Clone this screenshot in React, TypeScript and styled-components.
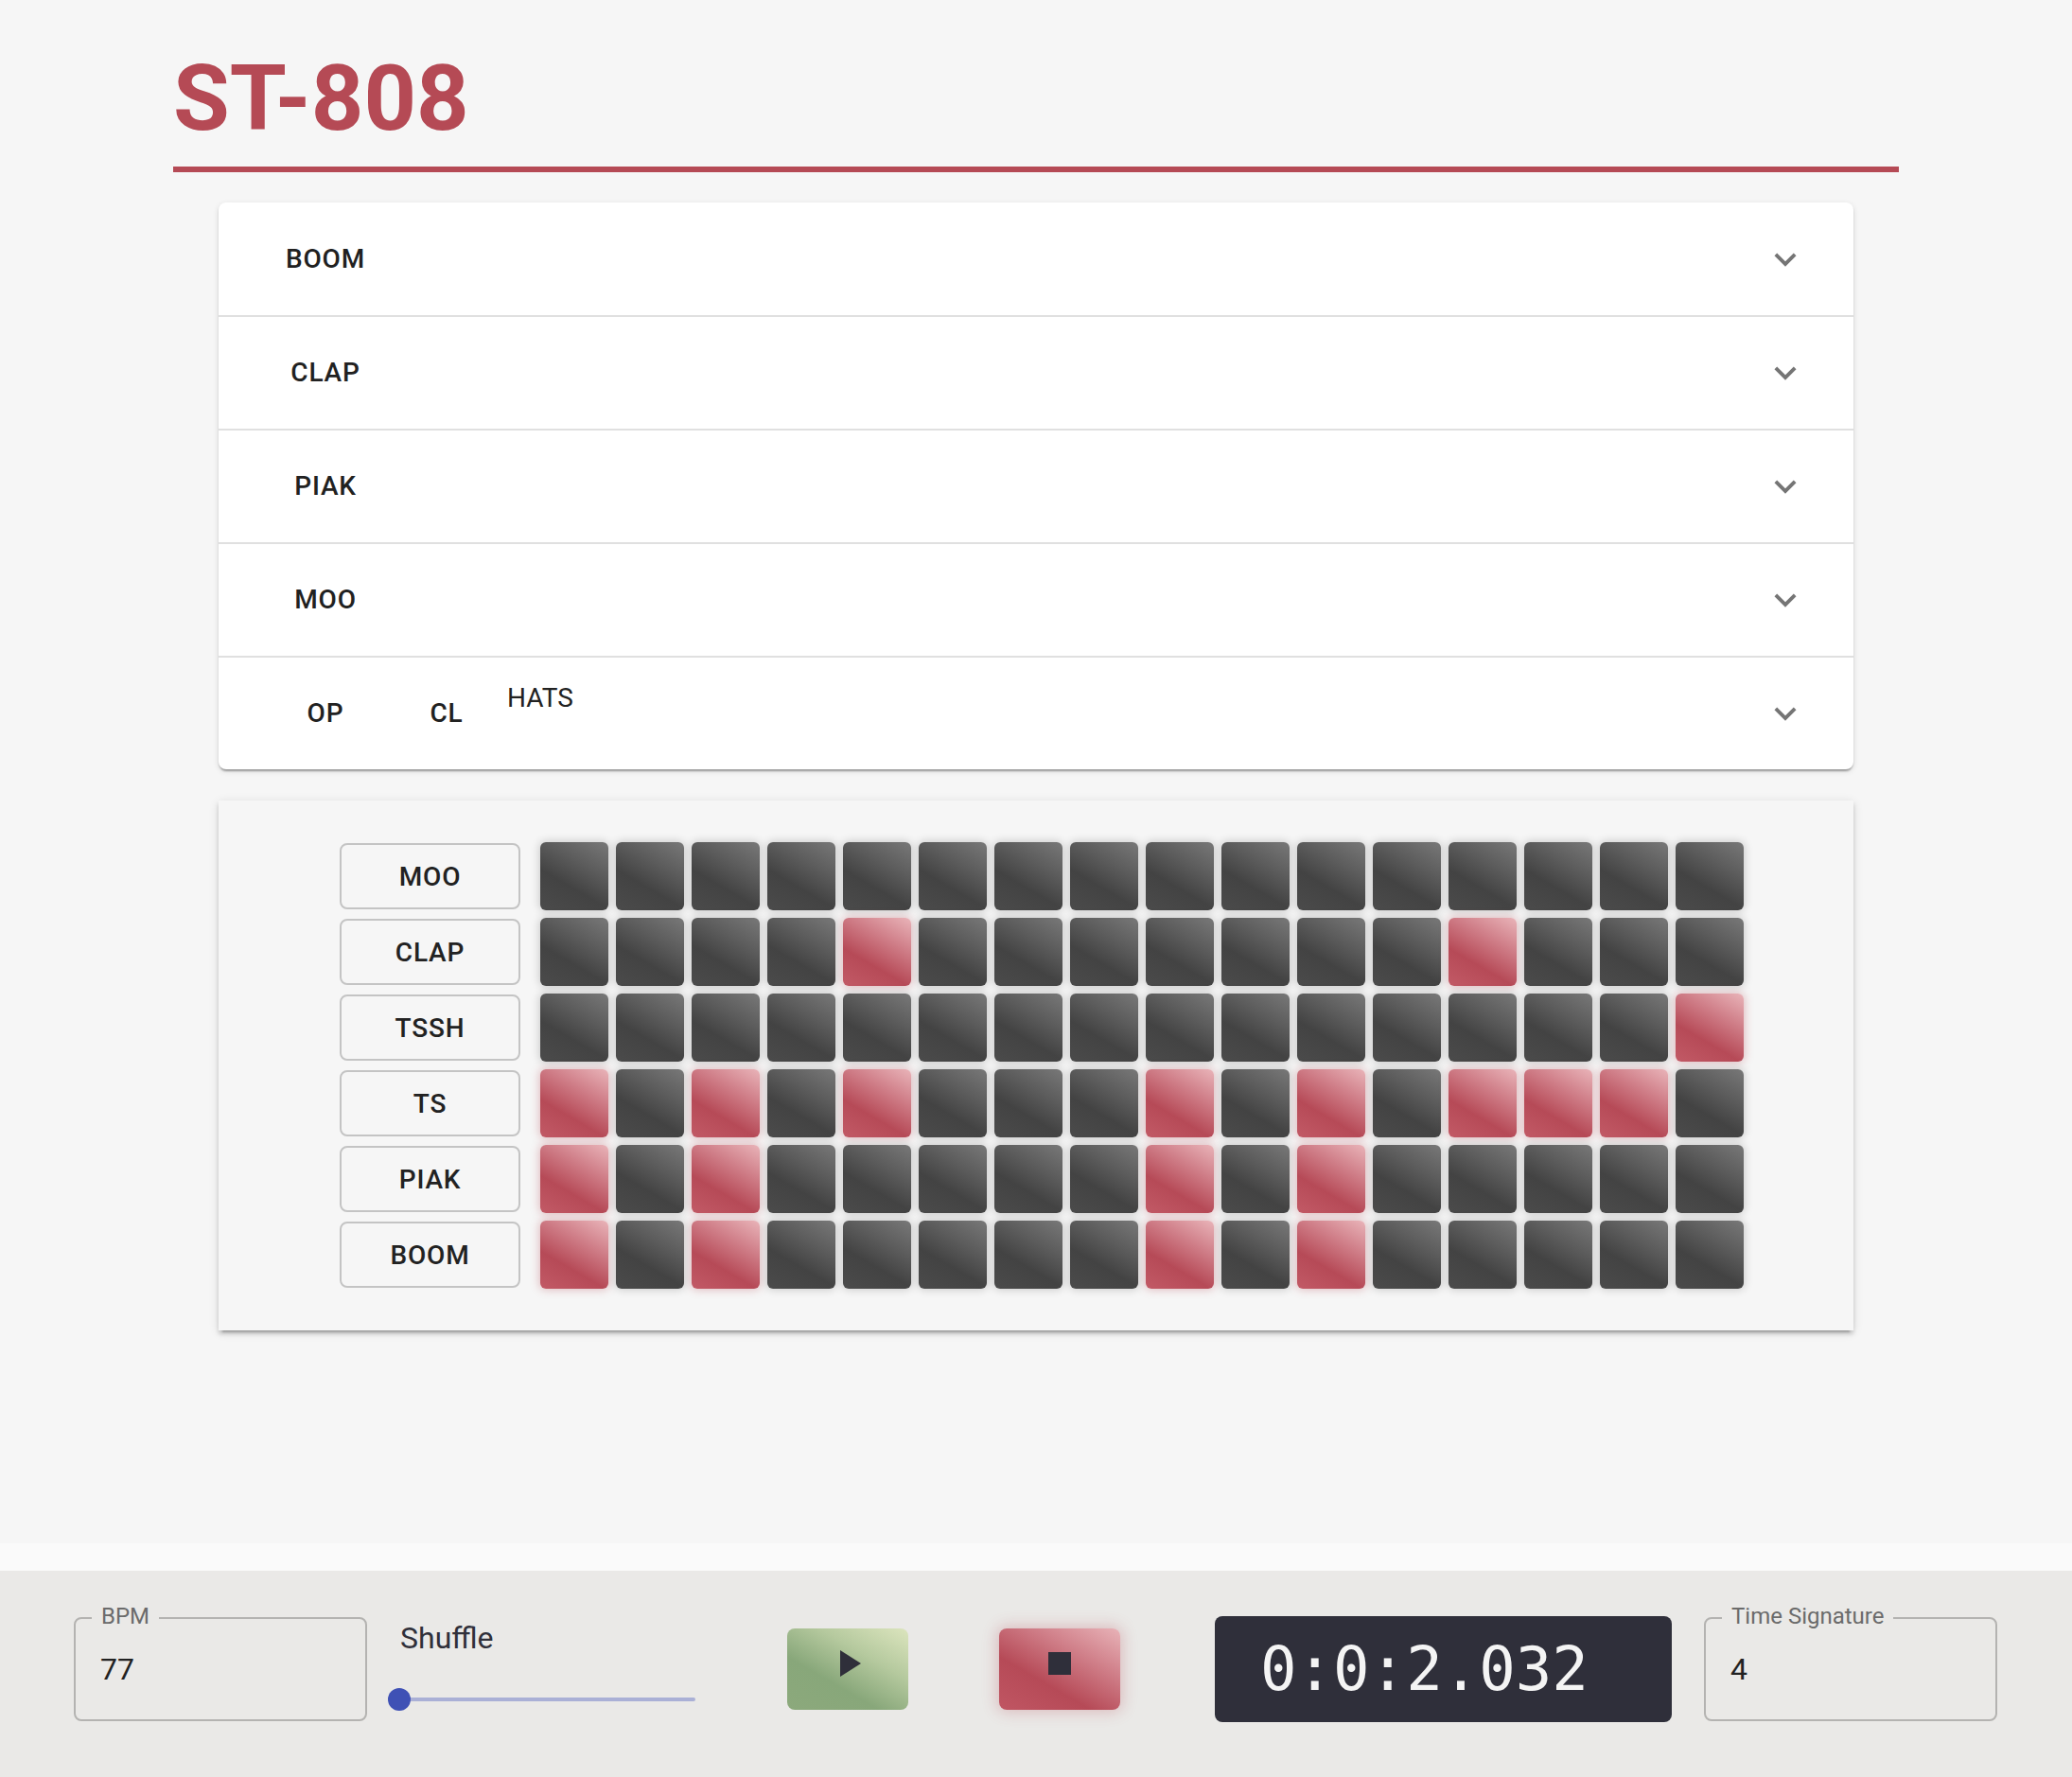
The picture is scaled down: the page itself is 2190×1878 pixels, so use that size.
import React from "react";
import styled, { createGlobalStyle } from "styled-components";

const GlobalStyle = createGlobalStyle`
  html, body {
    margin: 0;
    padding: 0;
    background: #fafafa;
    font-family: Roboto, "Liberation Sans", Arial, sans-serif;
  }
  * { box-sizing: border-box; }
`;

const Page = styled.div`
  display: flex;
  flex-direction: column;
  width: 100%;
`;

const Main = styled.main`
  background: #f6f6f6;
  height: 1631px;
  padding-top: 45px;
  display: flex;
  flex-direction: column;
  align-items: center;
`;

const Header = styled.header`
  width: 1824px;
  padding-bottom: 13px;
  border-bottom: 6px solid #b54a55;
`;

const Title = styled.h1`
  margin: 0;
  font-family: Roboto, "Liberation Sans", sans-serif;
  font-weight: 700;
  font-size: 97px;
  line-height: 118px;
  color: #b54a55;
`;

const Card = styled.section`
  width: 1728px;
  margin-top: 32px;
  background: #ffffff;
  border-radius: 8px;
  box-shadow: 0px 4px 2px -2px rgba(0, 0, 0, 0.2), 0px 2px 2px 0px rgba(0, 0, 0, 0.14),
    0px 2px 6px 0px rgba(0, 0, 0, 0.12);
  overflow: hidden;
`;

const Row = styled.div<{ $first?: boolean }>`
  display: flex;
  align-items: center;
  min-height: ${(p) => (p.$first ? "119px" : "118px")};
  border-top: ${(p) => (p.$first ? "none" : "2px solid #e0e0e0")};
  padding: 0 49px 0 49px;
`;

const RowContent = styled.div`
  flex: 1;
  display: flex;
  align-items: flex-start;
  padding: 23px 0;
`;

const TextButton = styled.button`
  width: 128px;
  height: 72px;
  border: none;
  background: transparent;
  font-family: Roboto, "Liberation Sans", sans-serif;
  font-weight: 500;
  font-size: 28px;
  letter-spacing: 0.8px;
  line-height: 72px;
  color: #212121;
  text-transform: uppercase;
  padding: 0;
  cursor: pointer;
`;

const RowText = styled.span`
  font-family: Roboto, "Liberation Sans", sans-serif;
  font-weight: 400;
  font-size: 28px;
  line-height: 40px;
  color: #222222;
`;

const ExpandIcon = styled.svg`
  width: 46px;
  height: 46px;
  fill: #757575;
  flex-shrink: 0;
`;

const Panel = styled.section`
  width: 1728px;
  margin-top: 33px;
  background: #f6f6f6;
  padding: 44px 0 44px 128px;
  box-shadow: 0px 6px 2px -4px rgba(0, 0, 0, 0.2), 0px 4px 4px 0px rgba(0, 0, 0, 0.14),
    0px 2px 10px 0px rgba(0, 0, 0, 0.12);
  display: flex;
  flex-direction: column;
  gap: 8px;
`;

const SeqRow = styled.div`
  display: flex;
  align-items: center;
`;

const TrackLabel = styled.button`
  width: 191px;
  height: 70px;
  margin-right: 21px;
  border: 2px solid #c4c4c4;
  border-radius: 8px;
  background: transparent;
  font-family: Roboto, "Liberation Sans", sans-serif;
  font-weight: 500;
  font-size: 28px;
  letter-spacing: 0.8px;
  color: #222222;
  padding: 0;
`;

const Pads = styled.div`
  display: flex;
  gap: 8px;
`;

const Pad = styled.div<{ $on: boolean }>`
  width: 72px;
  height: 72px;
  border-radius: 6px;
  background: ${(p) =>
    p.$on
      ? "linear-gradient(30deg, #c25a66 0%, #b64a57 35%, #d07f89 68%, #e9b4b9 100%)"
      : "linear-gradient(30deg, #4b4b4b 0%, #434343 38%, #5c5c5c 66%, #787878 100%)"};
  box-shadow: ${(p) =>
    p.$on ? "0 0 10px 1px rgba(181, 74, 85, 0.35)" : "0 0 10px 1px rgba(0, 0, 0, 0.18)"};
`;

const Footer = styled.footer`
  margin-top: 29px;
  height: 218px;
  background: #eae9e7;
  padding: 48px 78px 58px;
  display: flex;
  align-items: center;
  gap: 34px;
`;

const Field = styled.div`
  position: relative;
  width: 310px;
  height: 110px;
  border: 2px solid #b4b3b1;
  border-radius: 8px;
  display: flex;
  align-items: center;
  padding: 0 26px;
  flex-shrink: 0;
`;

const FieldLabel = styled.span`
  position: absolute;
  top: -17px;
  left: 17px;
  padding: 0 10px;
  background: #eae9e7;
  font-size: 24px;
  line-height: 28px;
  color: #6b6b6b;
`;

const FieldValue = styled.span`
  font-size: 32px;
  color: #222222;
`;

const ShuffleBlock = styled.div`
  width: 313px;
  height: 112px;
  padding-top: 3px;
  display: flex;
  flex-direction: column;
  flex-shrink: 0;
`;

const ShuffleLabel = styled.span`
  font-size: 32px;
  line-height: 40px;
  color: #30303a;
  margin-left: 1px;
`;

const Slider = styled.div`
  position: relative;
  margin-top: 33px;
  height: 24px;
  display: flex;
  align-items: center;
`;

const Track = styled.div`
  width: 100%;
  height: 4px;
  border-radius: 2px;
  background: #aab0d6;
`;

const Thumb = styled.div`
  position: absolute;
  left: -12px;
  top: 0;
  width: 24px;
  height: 24px;
  border-radius: 50%;
  background: #3f51b5;
`;

const TransportButton = styled.button<{ $variant: "play" | "stop" }>`
  width: 128px;
  height: 86px;
  border: none;
  border-radius: 8px;
  display: flex;
  align-items: center;
  justify-content: center;
  flex-shrink: 0;
  margin-left: ${(p) => (p.$variant === "play" ? "63px" : "62px")};
  background: ${(p) =>
    p.$variant === "play"
      ? "linear-gradient(30deg, #8ca97c 0%, #88a77a 35%, #b5c99e 66%, #dce5be 100%)"
      : "linear-gradient(30deg, #c05663 0%, #b64a57 35%, #d07f89 68%, #e8b3b8 100%)"};
  box-shadow: ${(p) => (p.$variant === "stop" ? "0 0 16px 2px rgba(181, 74, 85, 0.3)" : "none")};
  padding: 0;
`;

const StopSquare = styled.div`
  width: 24px;
  height: 24px;
  background: #2f2f3a;
  margin-bottom: 12px;
`;

const PlayIcon = styled.svg`
  width: 22px;
  height: 28px;
  margin-left: 6px;
  margin-bottom: 12px;
  fill: #2f2f3a;
`;

const Timer = styled.div`
  width: 483px;
  height: 112px;
  margin-left: 66px;
  border-radius: 8px;
  background: #2f2f3a;
  color: #f4f4f4;
  display: flex;
  align-items: center;
  padding-left: 48px;
  font-family: "DejaVu Sans Mono", "Liberation Mono", monospace;
  font-size: 64px;
  flex-shrink: 0;
`;

const ChevronDown = () => (
  <ExpandIcon viewBox="0 0 24 24">
    <path d="M16.59 8.59 12 13.17 7.41 8.59 6 10l6 6 6-6z" />
  </ExpandIcon>
);

const accordionRows = ["BOOM", "CLAP", "PIAK", "MOO"];

const tracks: { name: string; on: number[] }[] = [
  { name: "MOO", on: [] },
  { name: "CLAP", on: [5, 13] },
  { name: "TSSH", on: [16] },
  { name: "TS", on: [1, 3, 5, 9, 11, 13, 14, 15] },
  { name: "PIAK", on: [1, 3, 9, 11] },
  { name: "BOOM", on: [1, 3, 9, 11] },
];

export default function App() {
  return (
    <Page>
      <GlobalStyle />
      <Main>
        <Header>
          <Title>ST-808</Title>
        </Header>
        <Card>
          {accordionRows.map((name, i) => (
            <Row key={name} $first={i === 0}>
              <RowContent>
                <TextButton>{name}</TextButton>
              </RowContent>
              <ChevronDown />
            </Row>
          ))}
          <Row>
            <RowContent>
              <TextButton>OP</TextButton>
              <TextButton>CL</TextButton>
              <RowText>HATS</RowText>
            </RowContent>
            <ChevronDown />
          </Row>
        </Card>
        <Panel>
          {tracks.map((t) => (
            <SeqRow key={t.name}>
              <TrackLabel>{t.name}</TrackLabel>
              <Pads>
                {Array.from({ length: 16 }, (_, i) => (
                  <Pad key={i} $on={t.on.includes(i + 1)} />
                ))}
              </Pads>
            </SeqRow>
          ))}
        </Panel>
      </Main>
      <Footer>
        <Field>
          <FieldLabel>BPM</FieldLabel>
          <FieldValue>77</FieldValue>
        </Field>
        <ShuffleBlock>
          <ShuffleLabel>Shuffle</ShuffleLabel>
          <Slider>
            <Track />
            <Thumb />
          </Slider>
        </ShuffleBlock>
        <TransportButton $variant="play">
          <PlayIcon viewBox="0 0 22 28">
            <polygon points="0,0 22,14 0,28" />
          </PlayIcon>
        </TransportButton>
        <TransportButton $variant="stop">
          <StopSquare />
        </TransportButton>
        <Timer>0:0:2.032</Timer>
        <Field>
          <FieldLabel>Time Signature</FieldLabel>
          <FieldValue>4</FieldValue>
        </Field>
      </Footer>
    </Page>
  );
}
